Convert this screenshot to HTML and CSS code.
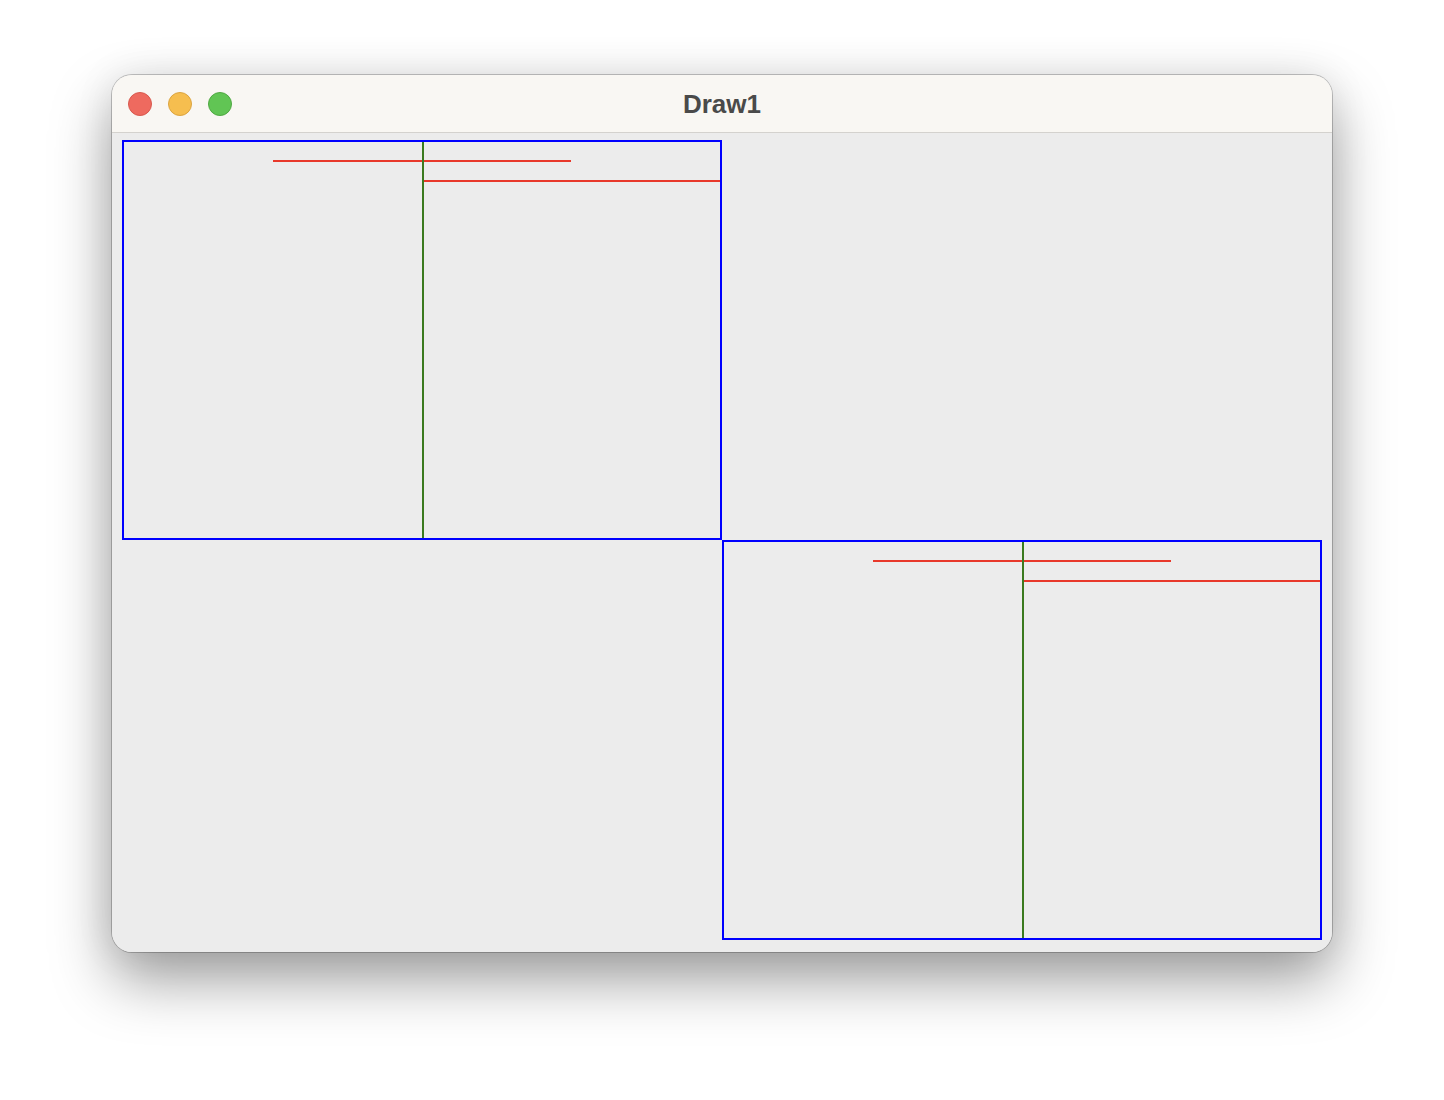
FILE: index.html
```html
<!DOCTYPE html>
<html>
<head>
<meta charset="utf-8">
<link rel="stylesheet" href="styles.css">
</head>
<body>
<div class="window">
  <div class="titlebar">
    <div class="lights">
      <span class="light close"></span>
      <span class="light min"></span>
      <span class="light max"></span>
    </div>
    <div class="title">Draw1</div>
    <div></div>
  </div>
  <div class="content">
    <svg class="canvas" width="1220" height="819" viewBox="0 0 1220 819">
      <g fill="none" stroke-width="2">
        <line x1="161" y1="28" x2="459" y2="28" stroke="#e8392b"/>
        <line x1="311" y1="48" x2="609" y2="48" stroke="#e8392b"/>
        <line x1="311" y1="8" x2="311" y2="406" stroke="#3b7a1f"/>
        <rect x="11" y="8" width="598" height="398" stroke="#0000ff"/>
        <line x1="761" y1="428" x2="1059" y2="428" stroke="#e8392b"/>
        <line x1="911" y1="448" x2="1209" y2="448" stroke="#e8392b"/>
        <line x1="911" y1="408" x2="911" y2="806" stroke="#3b7a1f"/>
        <rect x="611" y="408" width="598" height="398" stroke="#0000ff"/>
      </g>
    </svg>
  </div>
</div>
</body>
</html>
```
FILE: styles.css
```css
html, body {
  margin: 0;
  padding: 0;
  background: #ffffff;
}
body {
  width: 1444px;
  height: 1100px;
  overflow: hidden;
}
.window {
  margin: 75px 0 0 112px;
  width: 1220px;
  height: 877px;
  border-radius: 20px;
  overflow: hidden;
  background: #ececec;
  box-shadow: 0 0 0 1px rgba(0,0,0,0.22), 0 28px 60px rgba(0,0,0,0.38), 0 0 40px rgba(0,0,0,0.08);
  display: flex;
  flex-direction: column;
}
.titlebar {
  height: 57px;
  background: #f9f7f3;
  border-bottom: 1px solid #d4d2ce;
  display: grid;
  grid-template-columns: 1fr auto 1fr;
  align-items: center;
  flex: none;
}
.lights {
  display: flex;
  gap: 16px;
  padding-left: 16px;
  padding-top: 1px;
}
.light {
  width: 22px;
  height: 22px;
  border-radius: 50%;
  display: block;
}
.close { background: #ee6a5f; border: 1px solid #d8594e; }
.min { background: #f6be4f; border: 1px solid #dba440; }
.max { background: #61c554; border: 1px solid #50a843; }
.title {
  font-family: "Liberation Sans", Arial, sans-serif;
  font-weight: bold;
  font-size: 26px;
  color: #4a4a4a;
  padding-top: 1px;
}
.content {
  flex: 1;
  background: #ececec;
}
.canvas {
  display: block;
}
```
